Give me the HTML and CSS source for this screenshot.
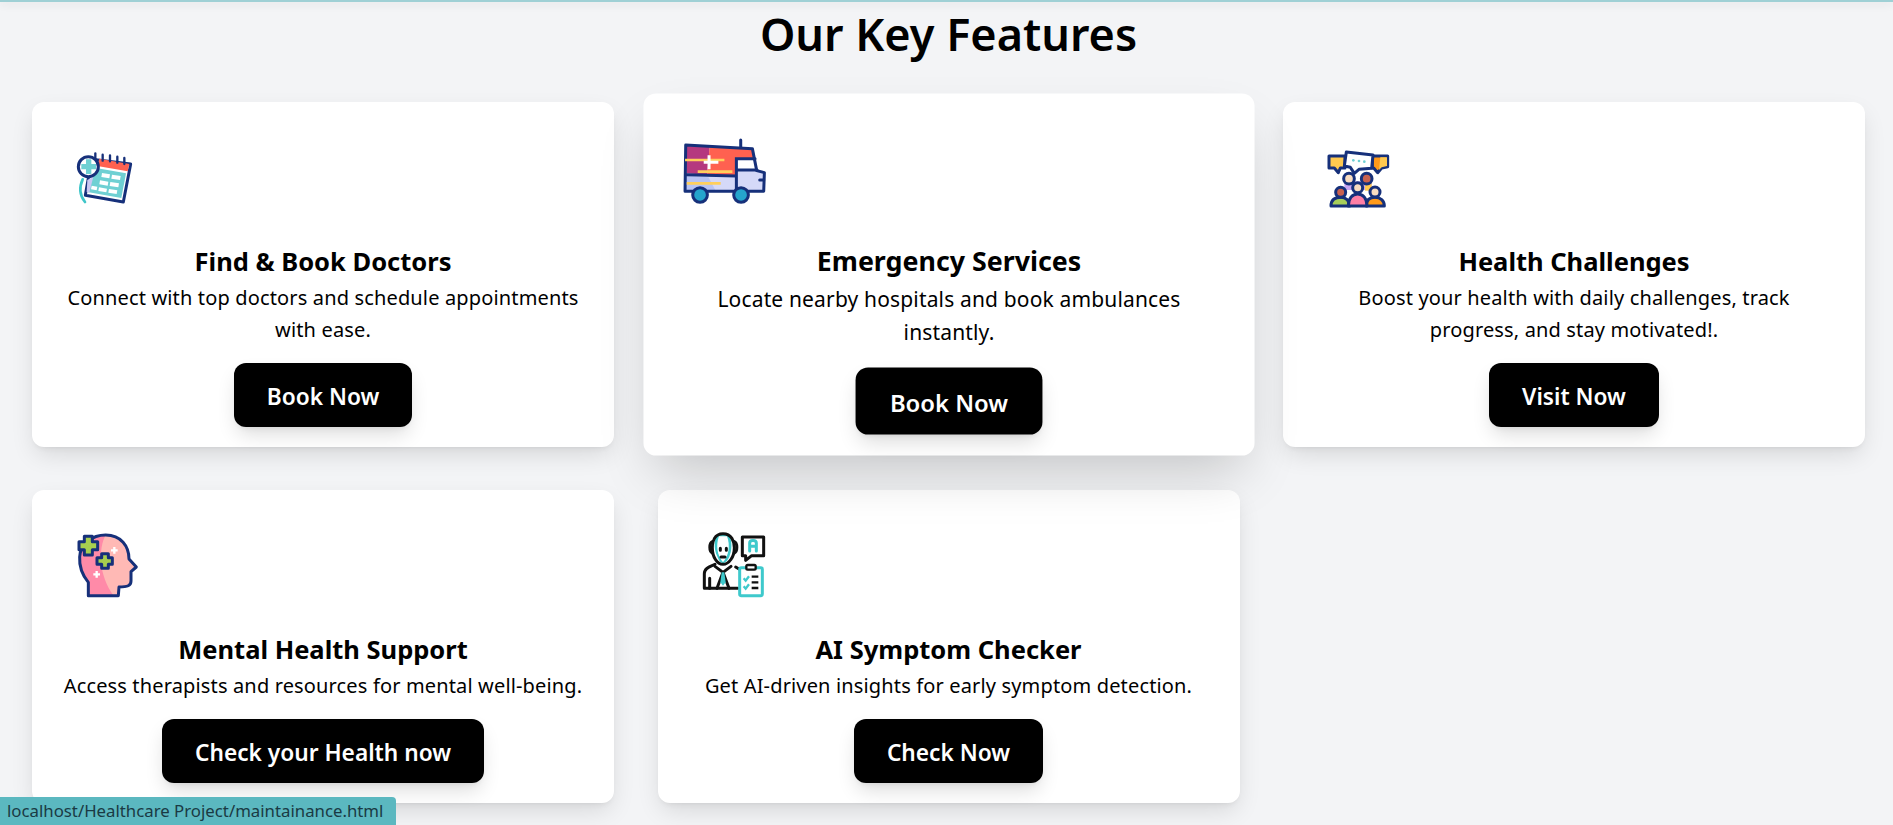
FILE: index.html
```html
<!DOCTYPE html>
<html lang="en">
<head>
<meta charset="utf-8">
<title>Our Key Features</title>
<link rel="stylesheet" href="styles.css">
</head>
<body>
<div class="topbar"></div>
<section class="features">
  <h1 class="features-title">Our Key Features</h1>
  <div class="card-grid">
    <article class="card">
      <svg class="card-icon" viewBox="12 -18 240 240" aria-hidden="true">
        <path d="M95 58L212 72L190 186L76 166Z" fill="#fff" stroke="#16307a" stroke-width="9" stroke-linejoin="round"/>
        <path d="M118 56L208 72L203 94L112 78Z" fill="#ff6150"/>
        <path d="M108 84L198 100L184 174L82 156Z" fill="#6fd0d3"/>
        <path d="M82 120L100 110L88 158L80 156Z" fill="#c9c6f2"/>
        <g fill="#fff">
          <path d="M126 99L150 103L148 115L124 111Z"/><path d="M156 104L182 108L180 120L154 116Z"/>
          <path d="M120 121L145 125L143 137L118 133Z"/><path d="M151 126L177 130L175 142L149 138Z"/>
          <path d="M95 137L112 140L110 151L93 148Z"/><path d="M117 142L141 146L139 157L115 153Z"/><path d="M147 147L172 151L170 162L145 158Z"/>
        </g>
        <path d="M106 40V58M128 44V62M150 46V64M172 50V68M193 54V72" stroke="#16307a" stroke-width="7" stroke-linecap="round"/>
        <path d="M68 118C58 140 58 165 75 186" fill="none" stroke="#3fc6c9" stroke-width="8" stroke-linecap="round"/>
        <circle cx="85" cy="80" r="30" fill="#fff" stroke="#16307a" stroke-width="9"/>
        <path d="M78 58H94V72H108V88H94V102H78V88H64V72H78Z" fill="#6fd0d3"/>
      </svg>
      <h2 class="card-title">Find &amp; Book Doctors</h2>
      <p class="card-text">Connect with top doctors and schedule appointments with ease.</p>
      <a class="card-button" href="#">Book Now</a>
    </article>

    <article class="card card-active">
      <svg class="card-icon" viewBox="6 -9 252 252" aria-hidden="true">
        <path d="M32 45L232 56L245 122L268 128L266 184H30Z" fill="#d5d9f8"/>
        <path d="M32 138L100 142L122 182H32Z" fill="#b8c4f4"/>
        <path d="M34 47L104 50L96 135L34 130Z" fill="#b5397f"/>
        <path d="M104 50L232 56L238 88L186 86L184 136L96 135Z" fill="#ff6150"/>
        <path d="M187 86L240 88L247 120L187 120Z" fill="#fff"/>
        <path d="M32 45L232 56L245 122L268 128L266 184H30Z" fill="none" stroke="#16307a" stroke-width="9" stroke-linejoin="round"/>
        <path d="M184 184V86H240M184 120H246M34 134L184 138M197 30V52M254 150H266" fill="none" stroke="#16307a" stroke-width="9" stroke-linecap="round"/>
        <path d="M30 90H148M68 125H172M35 160H137" stroke="#ffcf5c" stroke-width="8"/>
        <path d="M102 76V118M86 97H130" stroke="#fff" stroke-width="9"/>
        <circle cx="75" cy="195" r="22" fill="#25a5cc" stroke="#16307a" stroke-width="9"/>
        <circle cx="198" cy="195" r="22" fill="#25a5cc" stroke="#16307a" stroke-width="9"/>
      </svg>
      <h2 class="card-title">Emergency Services</h2>
      <p class="card-text">Locate nearby hospitals and book ambulances instantly.</p>
      <a class="card-button" href="#">Book Now</a>
    </article>

    <article class="card">
      <svg class="card-icon" viewBox="0 -18 240 240" aria-hidden="true">
        <g stroke="#16307a" stroke-width="9" stroke-linejoin="round">
          <path d="M42 48H90V84H76L70 98L58 84H42Z" fill="#ffc94f"/>
          <path d="M172 48H218V80L200 84L188 98L176 84H172Z" fill="#ff9a1a"/>
          <path d="M94 36L174 45L170 85L132 88L118 100L106 82L88 78Z" fill="#fff"/>
          <path d="M196 52H216V78L200 82L192 90Z" fill="#ffc94f" stroke="none"/>
          <path d="M88 124H170V150H88Z" fill="#c8a5f2" stroke="none"/>
          <path d="M150 130H170V152H150Z" fill="#ffc94f" stroke="none"/>
          <circle cx="102" cy="116" r="16" fill="#f8dcc0"/>
          <circle cx="155" cy="116" r="16" fill="#c8614f"/>
          <path d="M48 198C48 178 62 172 78 172C92 172 104 182 104 198Z" fill="#a8cf5a"/>
          <path d="M154 198C154 178 166 172 180 172C196 172 208 182 208 198Z" fill="#ff9a1a"/>
          <circle cx="77" cy="157" r="15" fill="#c8614f"/>
          <circle cx="180" cy="156" r="15" fill="#f8dcc0"/>
          <path d="M100 198C100 175 112 162 128 162C144 162 156 175 156 198Z" fill="#ff7fa5"/>
          <circle cx="128" cy="143" r="15" fill="#f8dcc0"/>
        </g>
        <g fill="#6fd0d3"><circle cx="115" cy="61" r="4"/><circle cx="132" cy="63" r="4"/><circle cx="148" cy="65" r="4"/></g>
      </svg>
      <h2 class="card-title">Health Challenges</h2>
      <p class="card-text">Boost your health with daily challenges, track progress, and stay motivated!.</p>
      <a class="card-button" href="#">Visit Now</a>
    </article>

    <article class="card">
      <svg class="card-icon" viewBox="-3 -9 240 240" aria-hidden="true">
        <path d="M70 212V172C52 150 42 128 44 96C46 56 82 30 122 30C168 30 192 64 192 102L214 126L198 140V168C198 182 188 186 162 186L160 212Z" fill="#ffb9b5"/>
        <path d="M70 212V172C52 150 42 128 44 96C46 56 82 30 122 30C100 70 100 150 146 212Z" fill="#ff8aa8"/>
        <path d="M70 212V172C52 150 42 128 44 96C46 56 82 30 122 30C168 30 192 64 192 102L214 126L198 140V168C198 182 188 186 162 186L160 212Z" fill="none" stroke="#16307a" stroke-width="9" stroke-linejoin="round"/>
        <path d="M58 34H82V50H98V74H82V90H58V74H42V50H58Z" fill="#a7cf4f" stroke="#16307a" stroke-width="9" stroke-linejoin="round"/>
        <path d="M110 86H130V98H142V118H130V130H110V118H96V98H110Z" fill="#a7cf4f" stroke="#16307a" stroke-width="9" stroke-linejoin="round"/>
        <path d="M148 66V86M138 76H158M95 138V158M85 148H105" stroke="#fff" stroke-width="7"/>
      </svg>
      <h2 class="card-title">Mental Health Support</h2>
      <p class="card-text card-text-line">Access therapists and resources for mental well-being.</p>
      <a class="card-button" href="#">Check your Health now</a>
    </article>

    <article class="card">
      <svg class="card-icon" viewBox="-15 -9 240 240" aria-hidden="true">
        <g fill="none" stroke="#111" stroke-width="9" stroke-linejoin="round" stroke-linecap="round">
          <path d="M64 30C64 30 52 60 66 92C72 108 78 114 84 114L84 114C92 114 100 104 104 92C116 62 104 30 104 30Z" fill="#3ec9cc" stroke="none"/>
          <path d="M72 34C62 60 66 92 84 112C102 92 106 60 96 34Z" fill="#fff" stroke="none"/>
          <path d="M84 26C58 26 52 50 52 68C52 96 66 118 84 118C102 118 118 96 118 68C118 50 110 26 84 26Z"/>
          <path d="M52 50C42 54 42 80 52 84M118 50C128 54 128 80 118 84"/>
          <path d="M76 70V76M94 70V76M78 96H90"/>
          <path d="M60 118C50 124 28 126 28 146V190H128"/>
          <path d="M60 124L84 142L108 124M84 142L66 190M84 142L102 190M44 190V160M122 126L132 132"/>
          <path d="M80 142L76 172L84 182L92 172L88 142Z" fill="#3ec9cc" stroke="none"/>
          <path d="M142 36H206V92H170L152 106V92H142Z"/>
          <path d="M164 78V54C164 44 184 44 184 54V78M164 64H184" stroke="#3ec9cc"/>
        </g>
        <rect x="134" y="128" width="68" height="84" rx="5" fill="#fff" stroke="#3ec9cc" stroke-width="9"/>
        <rect x="154" y="120" width="28" height="14" rx="4" fill="#fff" stroke="#111" stroke-width="7"/>
        <path d="M146 160L152 167L162 154M146 184L152 191L162 178" fill="none" stroke="#3ec9cc" stroke-width="7"/>
        <path d="M170 155H190M170 172H190M170 189H190" stroke="#111" stroke-width="7"/>
      </svg>
      <h2 class="card-title">AI Symptom Checker</h2>
      <p class="card-text">Get AI-driven insights for early symptom detection.</p>
      <a class="card-button" href="#">Check Now</a>
    </article>
  </div>
</section>
<div class="status-bar">localhost/Healthcare Project/maintainance.html</div>
</body>
</html>
```
FILE: styles.css
```css
* { box-sizing: border-box; }

html, body {
  margin: 0;
  height: 100%;
  overflow: hidden;
}

body {
  background: #f3f4f6;
  color: #000;
  font-family: "Noto Sans", "Open Sans", sans-serif;
}

.topbar {
  height: 2px;
  background: #9fd0d5;
  box-shadow: 0 2px 8px rgba(0, 0, 0, 0.14);
}

.features {
  padding: 0 28px 0 32px;
}

.features-title {
  margin: 0 0 38px;
  height: 62px;
  font-size: 45px;
  line-height: 64px;
  font-weight: 600;
  text-align: center;
}

.card-grid {
  display: grid;
  grid-template-columns: repeat(3, 582px);
  column-gap: 43.5px;
  row-gap: 43px;
  align-items: start;
}

.card {
  display: flex;
  flex-direction: column;
  align-items: center;
  padding: 32px 32px 20px;
  background: #fff;
  border-radius: 12px;
  box-shadow: 0 10px 25px -3px rgba(0, 0, 0, 0.12), 0 4px 6px -4px rgba(0, 0, 0, 0.1);
  text-align: center;
}

.card-active {
  transform: scale(1.05);
  box-shadow: 0 25px 50px -12px rgba(0, 0, 0, 0.2);
}

.card-icon {
  display: block;
  align-self: flex-start;
  width: 80px;
  height: 80px;
  margin-bottom: 29px;
  overflow: visible;
}

.card-title {
  margin: 0 0 3px;
  font-size: 25.5px;
  line-height: 36px;
  font-weight: 700;
}

.card-text {
  margin: 0 0 17px;
  width: 100%;
  font-size: 20px;
  line-height: 32px;
  letter-spacing: 0.15px;
}

.card-text-line {
  width: auto;
  white-space: nowrap;
}

.card-button {
  display: block;
  padding: 0 33px;
  height: 64px;
  border-radius: 12px;
  background: #000;
  color: #fff;
  font-size: 22.7px;
  line-height: 67px;
  font-weight: 600;
  text-decoration: none;
  box-shadow: 0 10px 20px -3px rgba(0, 0, 0, 0.14), 0 4px 6px -4px rgba(0, 0, 0, 0.1);
}

.status-bar {
  position: fixed;
  left: 0;
  bottom: 0;
  width: 396px;
  height: 28px;
  padding-left: 7px;
  background: #5bb8c0;
  border-top-right-radius: 4px;
  color: #1a3a44;
  font-size: 16.8px;
  line-height: 28px;
  white-space: nowrap;
}
```
